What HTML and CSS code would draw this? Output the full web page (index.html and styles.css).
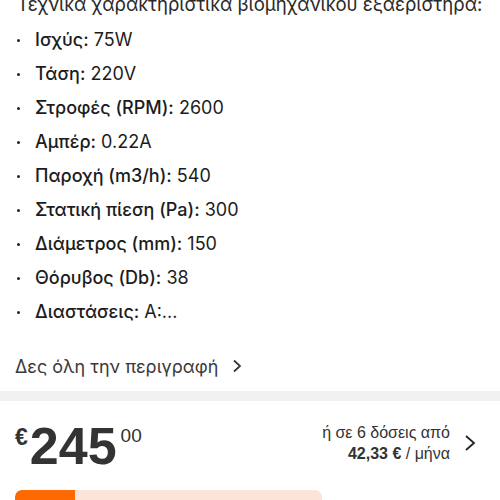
FILE: index.html
```
<!DOCTYPE html>
<html lang="el">
<head>
	<meta charset="UTF-8">
	<title>Εξαεριστήρας</title>
	<link rel="stylesheet" href="styles.css">
</head>
<body>
<div class="desc">
	<p class="desc-title">Τεχνικά χαρακτηριστικά βιομηχανικού εξαεριστήρα:</p>
	<ul class="specs">
		<li><b>Ισχύς:</b> 75W</li>
		<li><b>Τάση:</b> 220V</li>
		<li><b>Στροφές (RPM):</b> 2600</li>
		<li><b>Αμπέρ:</b> 0.22A</li>
		<li><b>Παροχή (m3/h):</b> 540</li>
		<li><b>Στατική πίεση (Pa):</b> 300</li>
		<li><b>Διάμετρος (mm):</b> 150</li>
		<li><b>Θόρυβος (Db):</b> 38</li>
		<li><b>Διαστάσεις:</b> Α:...</li>
	</ul>
	<a class="more" href="#">Δες όλη την περιγραφή
		<svg width="12" height="14" viewBox="0 0 12 14"><path d="M3 1.5 L9 7 L3 12.5" fill="none" stroke="#333" stroke-width="1.7"/></svg>
	</a>
</div>
<div class="sep"></div>
<div class="price-box">
	<div class="price">
		<span class="cur">€</span>
		<span class="int">245</span>
		<span class="dec">00</span>
	</div>
	<div class="inst">
		<div class="inst-text">
			<div>ή σε 6 δόσεις από</div>
			<div><b>42,33 €</b> / μήνα</div>
		</div>
		<svg width="12" height="18" viewBox="0 0 12 18"><path d="M2 2 L10 9 L2 16" fill="none" stroke="#222" stroke-width="1.8"/></svg>
	</div>
</div>
<div class="actions">
	<div class="btn-main"></div>
	<div class="btn-alt"></div>
</div>
</body>
</html>
```
FILE: styles.css
```
* {
	padding: 0;
	margin: 0;
	box-sizing: border-box;
}

body {
	width: 500px;
	height: 500px;
	overflow: hidden;
	background: #fff;
	color: #1c1c1c;
	font-family: Inter, "Noto Sans", sans-serif;
}

.desc {
	padding: 0 8px 0 17px;
}

.desc-title {
	margin-top: -8px;
	font-size: 18.6px;
	line-height: 24px;
	white-space: nowrap;
	color: #2a2a2a;
}

.specs {
	margin-top: 7px;
	list-style: none;
}

.specs li {
	position: relative;
	height: 34px;
	line-height: 34px;
	font-size: 18px;
	padding-left: 18px;
}

.specs li::before {
	content: "";
	position: absolute;
	left: 0;
	top: 16px;
	width: 3px;
	height: 3px;
	border-radius: 50%;
	background: #222;
}

.specs b {
	font-weight: 500;
}

.more {
	display: flex;
	align-items: center;
	gap: 13px;
	margin-top: 25px;
	margin-left: -2px;
	height: 24px;
	font-size: 18px;
	color: #3a3a3a;
	text-decoration: none;
}

.sep {
	margin-top: 13px;
	height: 10px;
	background: #f0f0f0;
}

.price-box {
	display: flex;
	justify-content: space-between;
	height: 89px;
	padding: 20px 24px 0 15px;
	font-family: "Liberation Sans", Arial, sans-serif;
	color: #333;
}

.price {
	display: flex;
	align-items: flex-start;
}

.cur {
	margin-top: 5px;
	font-size: 23px;
	line-height: 23px;
	font-weight: bold;
}

.int {
	margin-left: 2px;
	margin-top: -1px;
	font-size: 52px;
	line-height: 52px;
	font-weight: bold;
}

.dec {
	margin: 5px 0 0 4px;
	font-size: 19px;
	line-height: 19px;
}

.inst {
	display: flex;
	align-items: center;
	gap: 14px;
	height: 42px;
	margin-top: 1px;
}

.inst-text {
	text-align: right;
	font-size: 16px;
	line-height: 21px;
}

.actions {
	display: flex;
	padding-left: 15px;
}

.btn-main {
	width: 60px;
	height: 30px;
	background: #ff6a00;
	border-radius: 7px 0 0 0;
}

.btn-alt {
	width: 247px;
	height: 30px;
	background: #fde4d8;
	border-radius: 0 7px 0 0;
}
```
